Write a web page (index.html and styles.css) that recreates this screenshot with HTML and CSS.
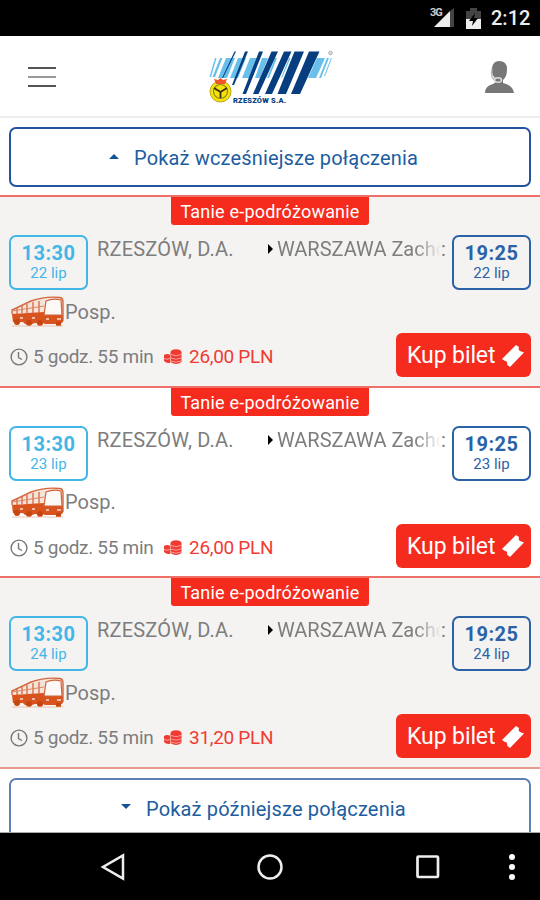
FILE: index.html
```html
<!DOCTYPE html>
<html lang="pl">
  <head>
    <meta charset="UTF-8" />
    <meta name="viewport" content="width=device-width, initial-scale=1.0" />
    <title>Rzeszów S.A. - połączenia</title>
    <link rel="stylesheet" href="styles.css">
  </head>
  <body>
    <!-- Shared icons -->
    <svg class="sprite" aria-hidden="true">
      <symbol id="bus" viewBox="0 0 53 31">
        <path d="M1 26V14L20 5Q34 0 49 1.500 52 2 52 6V26L48 28H30Z" fill="#f6e3da" />
        <path d="M1 18 33 16V19H52V26L49 28H34L32 27H24L21 28H14L12 26H2Z" fill="#d9531e" />
        <path d="M1 18V14L20 5Q34 0 49 1.500 52 2 52 6V25" fill="none" stroke="#d4673e" stroke-width="1.400" />
        <path d="M6 12V18M11 10V17M16 8V18M22 6V17M28 5V17" stroke="#d4673e" stroke-width="1.300" />
        <path d="M1 15 33 10" stroke="#dd8662" fill="none" />
        <path d="M35 5Q42 2 50 4L51 19H33Z" fill="#fbf8f6" stroke="#cf653f" stroke-width="1.200" />
        <g fill="#c54410"><circle cx="6" cy="26" r="3" /><circle cx="18" cy="27" r="3" /><circle cx="29" cy="27" r="3" /><rect x="45" y="26" width="5" height="4" /></g>
        <path d="M35 23h3M46 23h4M9 22h3M21 22h3" stroke="#f9d9ca" stroke-width="1.300" />
        <path d="M1 30H52" stroke="#e8b59d" stroke-width=".8" />
      </symbol>
      <symbol id="clock" viewBox="0 0 18 18">
        <circle cx="9" cy="9" r="7.900" fill="none" stroke="#777" stroke-width="1.400" />
        <path d="M8.500 4V9.500L12 11.500" fill="none" stroke="#777" stroke-width="1.400" />
      </symbol>
      <symbol id="coins" viewBox="0 0 18 16">
        <g fill="#f03b33"><ellipse cx="12" cy="3" rx="5.500" ry="2.800" /><path d="M6.500 3.500h11V13q-5.500 4-11 0ZM0 6q3-2 6.500 0v7.500q-3.500 1.500-6.500-1.500Z" /></g>
        <path d="M7 5.500q5 2.500 10 0M7 9q5 2.500 10 0M7 12q5 2.500 10 0M0 9.500q3 1.500 6 0M6.500 6v8" fill="none" stroke="#f9b9b4" stroke-width=".8" />
      </symbol>
      <symbol id="ticket" viewBox="0 0 22 22">
        <path d="M0 14 14 0 17 2Q16 5 18 6L22 7.500 8 22 5 19.500Q6 16 3 16Z" fill="#fff" />
      </symbol>
    </svg>

    <div class="status-bar">
      <svg class="signal" width="26" height="22" viewBox="0 0 26 22">
        <path d="M24 1V20H20V4Z" fill="#444" /><path d="M4 20 20 4V20Z" fill="#eee" />
        <text x="0" y="9" class="network">3G</text>
      </svg>
      <svg width="15" height="21" viewBox="0 0 15 21">
        <path d="M0 3H4V0H11V3H15V11H0Z" fill="#444" /><path d="M0 11H15V21H0Z" fill="#eee" />
        <path d="M9 5 3 13H7L6 18 12 10H8Z" fill="#000" />
      </svg>
      <span class="clock">2:12</span>
    </div>

    <header class="header">
      <div class="menu"><span></span><span class="light"></span><span></span></div>
      <svg class="logo" width="126" height="56" viewBox="0 0 126 56">
        <path d="M7 16h1.500L3 35H1.500ZM12 16h2.500L7 35H4.500ZM18 16h9L19 36H10ZM30 16h8L30 36H22ZM42 16h8L42 36H34ZM54 16h6L52 36H47ZM64 16h2L58 36H56ZM67 16h2L61 36H59ZM77 16h2L71 36H69ZM81 16h1.500L74 36H73ZM90 16h2L84 36H82ZM109 16h8L108 36H100ZM119 16h2L113 36H111ZM123 16h1L117 34H116Z" fill="#68c0ea" />
        <path d="M26.500 9.500H28L15 36H14ZM37 9.500h3L26 43H24ZM51 9.500h4L38 52H34.500ZM63.500 9.500H70L50.500 52H45ZM76 9.500h7.500L64 52H57ZM86.500 9.500H96L78 52H69.500ZM101 9.500h10.500L92 52H83Z" fill="#063e80" />
        <circle cx="12.500" cy="49.500" r="10.500" fill="#f6e20b" stroke="#b9a61d" />
        <circle cx="12.500" cy="49.500" r="7" fill="none" stroke="#8c8420" stroke-width="1.200" />
        <path d="M6 46 12.500 50 19 46M12.500 50v6" fill="none" stroke="#333018" stroke-width="1.800" />
        <path d="m8 42-2-5 4 1 2.500-2 2.500 2 4-1-2 5Z" fill="#f2552c" />
        <circle cx="122.500" cy="11" r="1.800" fill="#ddd" stroke="#999" stroke-width=".7" />
        <text x="25" y="61" class="logo-name" textLength="53">RZESZÓW S.A.</text>
      </svg>
      <svg class="user" width="29" height="34" viewBox="0 0 29 34">
        <path d="M0 33Q0 26 8 24L11 22V19Q6 15 7 8 8 1 14 1 22 1 22 9 22 17 18 20V23Q28 25 29 33Z" fill="#777" />
        <path d="M7 9Q5 19 11 20" fill="none" stroke="#bbb" stroke-width="1.500" />
        <ellipse cx="13" cy="20" rx="3.500" ry="2.300" fill="#777" stroke="#ddd" stroke-width="1.500" />
      </svg>
    </header>

    <main class="content">
      <button class="more-btn"><i class="caret up"></i><span>Pokaż wcześniejsze połączenia</span></button>

      <section class="connections">
        <article class="connection shaded">
          <div class="tag"><span>Tanie e-podróżowanie</span></div>
          <div class="route">
            <div class="time departure"><b>13:30</b><small>22 lip</small></div>
            <span class="city from">RZESZÓW, D.A.</span>
            <i class="arrow"></i>
            <span class="city to">WARSZAWA Zacho</span><span class="colon">:</span>
            <div class="time arrival"><b>19:25</b><small>22 lip</small></div>
          </div>
          <div class="vehicle"><svg width="53" height="31"><use href="#bus" /></svg><span>Posp.</span></div>
          <div class="details">
            <svg width="18" height="18"><use href="#clock" /></svg>
            <span class="duration">5 godz. 55 min</span>
            <svg width="18" height="16"><use href="#coins" /></svg>
            <span class="price">26,00 PLN</span>
            <button class="buy-btn"><span>Kup bilet</span><svg width="22" height="22"><use href="#ticket" /></svg></button>
          </div>
        </article>

        <article class="connection">
          <div class="tag"><span>Tanie e-podróżowanie</span></div>
          <div class="route">
            <div class="time departure"><b>13:30</b><small>23 lip</small></div>
            <span class="city from">RZESZÓW, D.A.</span>
            <i class="arrow"></i>
            <span class="city to">WARSZAWA Zacho</span><span class="colon">:</span>
            <div class="time arrival"><b>19:25</b><small>23 lip</small></div>
          </div>
          <div class="vehicle"><svg width="53" height="31"><use href="#bus" /></svg><span>Posp.</span></div>
          <div class="details">
            <svg width="18" height="18"><use href="#clock" /></svg>
            <span class="duration">5 godz. 55 min</span>
            <svg width="18" height="16"><use href="#coins" /></svg>
            <span class="price">26,00 PLN</span>
            <button class="buy-btn"><span>Kup bilet</span><svg width="22" height="22"><use href="#ticket" /></svg></button>
          </div>
        </article>

        <article class="connection shaded">
          <div class="tag"><span>Tanie e-podróżowanie</span></div>
          <div class="route">
            <div class="time departure"><b>13:30</b><small>24 lip</small></div>
            <span class="city from">RZESZÓW, D.A.</span>
            <i class="arrow"></i>
            <span class="city to">WARSZAWA Zacho</span><span class="colon">:</span>
            <div class="time arrival"><b>19:25</b><small>24 lip</small></div>
          </div>
          <div class="vehicle"><svg width="53" height="31"><use href="#bus" /></svg><span>Posp.</span></div>
          <div class="details">
            <svg width="18" height="18"><use href="#clock" /></svg>
            <span class="duration">5 godz. 55 min</span>
            <svg width="18" height="16"><use href="#coins" /></svg>
            <span class="price">31,20 PLN</span>
            <button class="buy-btn"><span>Kup bilet</span><svg width="22" height="22"><use href="#ticket" /></svg></button>
          </div>
        </article>
      </section>

      <button class="more-btn later"><i class="caret down"></i><span>Pokaż późniejsze połączenia</span></button>
    </main>

    <nav class="nav-bar">
      <svg width="26" height="28" viewBox="0 0 26 28"><path d="M23 2.500V25.500L3 14Z" fill="none" stroke="#eee" stroke-width="2.500" /></svg>
      <svg width="28" height="28" viewBox="0 0 28 28"><circle cx="14" cy="14" r="11.500" fill="none" stroke="#eee" stroke-width="2.500" /></svg>
      <svg width="26" height="26" viewBox="0 0 26 26"><rect x="2.500" y="2.500" width="20.500" height="20.500" rx="1" fill="none" stroke="#eee" stroke-width="2.700" /></svg>
      <svg width="8" height="28" viewBox="0 0 8 28"><g fill="#fff"><circle cx="4" cy="4" r="3" /><circle cx="4" cy="14" r="3" /><circle cx="4" cy="24" r="3" /></g></svg>
    </nav>
  </body>
</html>
```
FILE: styles.css
```css
* {
  margin: 0;
  padding: 0;
  box-sizing: border-box;
}

body {
  font-family: Roboto, "Liberation Sans", sans-serif;
  display: flex;
  flex-direction: column;
  height: 900px;
  overflow: hidden;
  background-color: #fff;
  color: #7d7d7d;
}

svg {
  display: block;
  flex: none;
}

button {
  font-family: inherit;
  cursor: pointer;
}

.sprite {
  display: none;
}

.status-bar {
  display: flex;
  flex: none;
  align-items: center;
  justify-content: flex-end;
  height: 36px;
  padding: 0 11px 0 0;
  background-color: #000;
}

.signal {
  margin-right: 10px;
  overflow: visible;
}

.network {
  font-size: 11px;
  font-weight: bold;
  letter-spacing: -1px;
  fill: #ccc;
}

.clock {
  width: 38px;
  margin-left: 10px;
  font-size: 20px;
  font-weight: 500;
  line-height: 38px;
  color: #eee;
}

.header {
  display: flex;
  flex: none;
  justify-content: space-between;
  height: 82px;
  padding: 0 26px 0 28px;
  border-bottom: 2px solid #eee;
}

.menu {
  display: flex;
  flex-direction: column;
  gap: 7px;
  width: 28px;
  padding-top: 31px;
}

.menu span {
  height: 2px;
  background-color: #555;
}

.menu .light {
  background-color: #999;
}

.logo {
  margin-top: 6px;
  overflow: visible;
}

.logo-name {
  font-size: 7.5px;
  font-weight: 900;
  fill: #064080;
}

.user {
  margin-top: 24px;
}

.content {
  flex: 1;
  min-height: 0;
  padding-top: 9px;
  overflow: hidden;
  border-bottom: 1px solid #aaa;
}

.more-btn {
  display: flex;
  align-items: center;
  justify-content: center;
  width: 522px;
  height: 60px;
  margin: 0 9px;
  padding: 2px 13px 0 0;
  border: 2px solid #24549d;
  border-radius: 7px;
  background-color: #fff;
  font-size: 20px;
  letter-spacing: 0.15px;
  color: #205da0;
}

.more-btn.later {
  border-color: #5c80b4;
}

.caret {
  margin-right: 15px;
  border: 5px solid transparent;
}

.caret.up {
  margin-top: -8px;
  border-bottom-color: #14539b;
}

.caret.down {
  margin-top: 1px;
  border-top-color: #14539b;
}

.connections {
  margin: 8px 0 9px;
  border-bottom: 2px solid #e99a91;
}

.connection {
  height: 190.5px;
  padding: 0 9px;
  border-top: 2px solid #ee7068;
}

.connection.shaded {
  background-color: #f4f3f1;
}

.tag {
  display: flex;
  justify-content: center;
  height: 28px;
  margin-bottom: 10px;
}

.tag span {
  width: 198px;
  border-radius: 0 0 3px 3px;
  background-color: #f52b1d;
  color: #fff;
  font-size: 18px;
  line-height: 30px;
  letter-spacing: 0.2px;
  height: 28px;
  text-align: center;
  white-space: nowrap;
}

.route {
  display: flex;
  height: 55px;
}

.time {
  display: flex;
  flex: none;
  flex-direction: column;
  align-items: center;
  width: 79px;
  padding-top: 5px;
  border: 2px solid;
  border-radius: 7px;
}

.time b {
  font-size: 20px;
  line-height: 22px;
  letter-spacing: 0.5px;
}

.time small {
  font-size: 15px;
  line-height: 18px;
}

.departure {
  margin-right: 9px;
  color: #43b6e8;
}

.arrival {
  margin-left: auto;
  color: #2b62a7;
}

.city {
  font-size: 20px;
  line-height: 29px;
  white-space: nowrap;
}

.from {
  width: 170px;
  letter-spacing: 0.2px;
}

.arrow {
  height: 10px;
  margin: 9px 4px 0 1px;
  border-style: solid;
  border-width: 5px 0 5px 5px;
  border-color: transparent #000;
}

.to {
  width: 164px;
  overflow: hidden;
  mask-image: linear-gradient(to right, #000 84%, transparent);
}

.colon {
  font-size: 20px;
  line-height: 29px;
}

.vehicle {
  display: flex;
  align-items: center;
  height: 31px;
  margin: 6px 0 6px 2px;
  font-size: 20px;
}

.vehicle span {
  margin-left: 1px;
}

.details {
  display: flex;
  align-items: center;
  height: 44px;
  padding-left: 1px;
  font-size: 19px;
}

.details > svg {
  margin-top: 4px;
}

.duration {
  width: 131px;
  margin-left: 5px;
  padding-top: 3px;
  letter-spacing: -0.3px;
  white-space: nowrap;
}

.price {
  margin-left: 7px;
  padding-top: 3px;
  letter-spacing: -0.3px;
  color: #f03b33;
}

.buy-btn {
  display: flex;
  align-items: center;
  justify-content: space-between;
  width: 135px;
  height: 44px;
  margin-left: auto;
  padding: 1px 7px 0 11px;
  border: none;
  border-radius: 6px;
  background-color: #f52b1d;
  color: #fff;
  font-size: 23px;
  letter-spacing: -0.1px;
}

.nav-bar {
  display: grid;
  flex: none;
  grid-template-columns: 126px 158px 157px 75px;
  align-items: center;
  justify-items: end;
  height: 67px;
  background-color: #000;
}
```
